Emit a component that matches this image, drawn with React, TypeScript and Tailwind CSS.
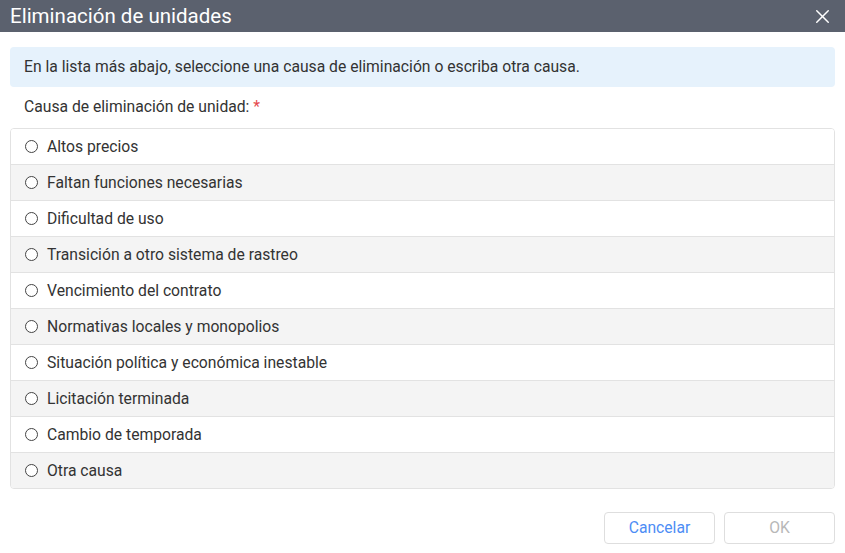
import { X } from 'lucide-react';

const CAUSES = [
  'Altos precios',
  'Faltan funciones necesarias',
  'Dificultad de uso',
  'Transición a otro sistema de rastreo',
  'Vencimiento del contrato',
  'Normativas locales y monopolios',
  'Situación política y económica inestable',
  'Licitación terminada',
  'Cambio de temporada',
  'Otra causa',
];

export default function App() {
  return (
    <div className="w-[845px] h-[553px] bg-white font-['Roboto',sans-serif] text-[#333]">
      <div className="h-[32px] bg-[#5b616e] flex items-center justify-between pl-[10px] pr-[11px]">
        <span className="text-white text-[20.5px] leading-none">Eliminación de unidades</span>
        <X className="w-[23px] h-[23px] text-white" strokeWidth={1.5} />
      </div>

      <div className="px-[10px] pt-[15px]">
        <div className="h-[40px] bg-[#e6f2fc] rounded-[4px] flex items-center px-[14px] text-[15.7px]">
          En la lista más abajo, seleccione una causa de eliminación o escriba otra causa.
        </div>
        <div className="pl-[14px] mt-[9px] h-[22px] flex items-center text-[15.7px]">
          Causa de eliminación de unidad:&nbsp;<span className="text-[#e5484d]">*</span>
        </div>

        <div className="mt-[10px] border border-[#e2e2e2] rounded-[4px] overflow-hidden">
          {CAUSES.map((c, idx) => (
            <label
              key={c}
              className={`flex items-center pl-[14px] text-[15.7px] ${idx === 0 ? 'h-[35px]' : 'h-[36px] border-t border-[#e2e2e2]'} ${idx % 2 === 1 ? 'bg-[#f4f4f4]' : 'bg-white'}`}
            >
              <span className="w-[13px] h-[13px] rounded-full border border-[#444] bg-white mr-[9px]" />
              {c}
            </label>
          ))}
        </div>

        <div className="flex justify-end gap-[9px] mt-[23px]">
          <button className="w-[111px] h-[32px] border border-[#dedede] rounded-[4px] text-[15.7px] text-[#4d8df5] bg-white">
            Cancelar
          </button>
          <button className="w-[111px] h-[32px] border border-[#dedede] rounded-[4px] text-[15.7px] text-[#b8b8b8] bg-white">
            OK
          </button>
        </div>
      </div>
    </div>
  );
}
